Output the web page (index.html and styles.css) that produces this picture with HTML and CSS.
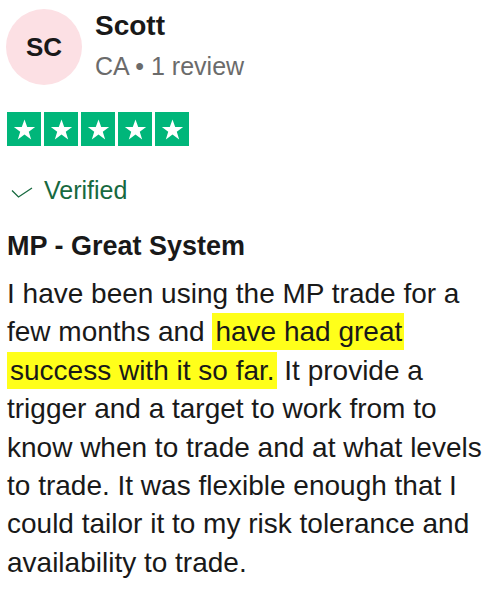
FILE: index.html
```html
<!DOCTYPE html>
<html>
<head>
<meta charset="utf-8">
<link rel="stylesheet" href="styles.css">
</head>
<body>
<div class="review">
  <div class="header">
    <div class="avatar">SC</div>
    <div class="who">
      <div class="name">Scott</div>
      <div class="meta">CA • 1 review</div>
    </div>
  </div>
  <div class="stars">
    <span class="star"><svg viewBox="0 0 24 24"><path d="M12 2.5l2.6 7.2h7.6l-6.1 4.5 2.3 7.3-6.4-4.6-6.4 4.6 2.3-7.3-6.1-4.5h7.6z" fill="#fff"/></svg></span>
    <span class="star"><svg viewBox="0 0 24 24"><path d="M12 2.5l2.6 7.2h7.6l-6.1 4.5 2.3 7.3-6.4-4.6-6.4 4.6 2.3-7.3-6.1-4.5h7.6z" fill="#fff"/></svg></span>
    <span class="star"><svg viewBox="0 0 24 24"><path d="M12 2.5l2.6 7.2h7.6l-6.1 4.5 2.3 7.3-6.4-4.6-6.4 4.6 2.3-7.3-6.1-4.5h7.6z" fill="#fff"/></svg></span>
    <span class="star"><svg viewBox="0 0 24 24"><path d="M12 2.5l2.6 7.2h7.6l-6.1 4.5 2.3 7.3-6.4-4.6-6.4 4.6 2.3-7.3-6.1-4.5h7.6z" fill="#fff"/></svg></span>
    <span class="star"><svg viewBox="0 0 24 24"><path d="M12 2.5l2.6 7.2h7.6l-6.1 4.5 2.3 7.3-6.4-4.6-6.4 4.6 2.3-7.3-6.1-4.5h7.6z" fill="#fff"/></svg></span>
  </div>
  <div class="verified">
    <svg class="check" viewBox="0 0 22 11"><path d="M1 3.5L7.5 10 21 1" fill="none" stroke="#17693f" stroke-width="1.3"/></svg>
    <span>Verified</span>
  </div>
  <h2 class="title">MP - Great System</h2>
  <p class="body">I have been using the MP trade for a few months and <mark class="hl">have had great success with it so far.</mark> It provide a trigger and a target to work from to know when to trade and at what levels to trade. It was flexible enough that I could tailor it to my risk tolerance and availability to trade.</p>
</div>
</body>
</html>
```
FILE: styles.css
```css
html, body {
  margin: 0;
  padding: 0;
  background: #fff;
}
body {
  font-family: "Liberation Sans", Arial, sans-serif;
  color: #191919;
}
.review {
  padding: 9px 0 0 7px;
}
.header {
  display: flex;
  align-items: flex-start;
  gap: 13px;
  margin-left: -1px;
}
.avatar {
  width: 76px;
  height: 76px;
  border-radius: 50%;
  background: #fce0e4;
  display: flex;
  align-items: center;
  justify-content: center;
  font-weight: bold;
  font-size: 26px;
  color: #191919;
  flex: none;
}
.who {
  padding-top: 1px;
}
.name {
  font-weight: bold;
  font-size: 28px;
  line-height: 32px;
}
.meta {
  font-size: 25px;
  line-height: 30px;
  margin-top: 9px;
  color: #6b6b6b;
}
.stars {
  display: flex;
  gap: 3px;
  margin-top: 27px;
}
.star {
  width: 34px;
  height: 34px;
  background: #00b67a;
  display: flex;
  align-items: center;
  justify-content: center;
}
.star svg {
  width: 25px;
  height: 25px;
}
.verified {
  display: flex;
  align-items: center;
  gap: 11px;
  margin-top: 29px;
  padding-left: 4px;
  color: #17693f;
  font-size: 25px;
  line-height: 30px;
}
.check {
  width: 22px;
  height: 11px;
  margin-top: 5px;
}
.title {
  font-size: 27px;
  font-weight: bold;
  margin: 25px 0 0 0;
  line-height: 32px;
}
.body {
  font-size: 28px;
  line-height: 38.4px;
  margin: 13px 0 0 0;
  padding-right: 0;
}
.hl {
  background: #ffff1a;
  color: inherit;
  padding: 3px 2px 3px 3px;
  -webkit-box-decoration-break: clone;
  box-decoration-break: clone;
}
```
